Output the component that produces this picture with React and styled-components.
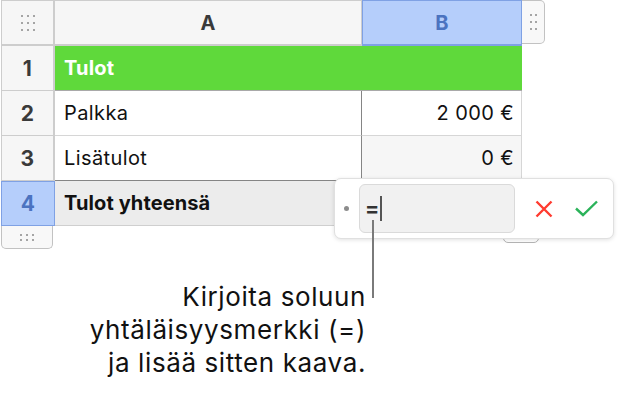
import React from 'react';
import styled, { createGlobalStyle, css } from 'styled-components';

const GlobalStyle = createGlobalStyle`
  html, body {
    margin: 0;
    padding: 0;
    background: #fff;
  }
  body {
    font-family: Inter, "Liberation Sans", sans-serif;
    -webkit-font-smoothing: antialiased;
  }
`;

const LINE = '#cdcdcd';
const DARK = '#858585';
const SEL_BG = '#b5cefb';
const SEL_LINE = '#7fa1e4';
const SEL_TEXT = '#4b73c0';

const Page = styled.div`
  position: relative;
  width: 630px;
  height: 394px;
  overflow: hidden;
`;

const Sheet = styled.div`
  display: grid;
  grid-template-columns: 54px 307px 160px 23px;
  grid-template-rows: 46px 45px 45px 45px 45px 23px;
  width: max-content;
  margin: 0 0 0 1px;
`;

const Dots = styled.div`
  display: grid;
  grid-template-columns: repeat(${p => p.$cols}, 2px);
  grid-auto-rows: 2px;
  column-gap: ${p => p.$gap || 4}px;
  row-gap: ${p => p.$rowGap || 5}px;

  span {
    width: 2px;
    height: 2px;
    border-radius: 50%;
    background: #8a8a8a;
  }
`;

const HeadBase = css`
  box-sizing: border-box;
  display: flex;
  align-items: center;
  justify-content: center;
  background: #f6f6f6;
  color: #3a3a3a;
  font-weight: 700;
  font-size: 20px;
  letter-spacing: 0.3px;
`;

const Corner = styled.div`
  ${HeadBase};
  border: 1px solid ${LINE};
  border-width: 1px 2px 2px 1px;
`;

const ColHead = styled.div`
  ${HeadBase};
  border-top: 1px solid ${LINE};
  border-right: 1px solid ${LINE};
  border-bottom: 2px solid ${LINE};

  ${p => p.$selected && css`
    background: ${SEL_BG};
    color: ${SEL_TEXT};
    border: 1.5px solid ${SEL_LINE};
    border-bottom-width: 2px;
  `}
`;

const SideHandle = styled.div`
  box-sizing: border-box;
  display: flex;
  align-items: center;
  justify-content: center;
  background: #f8f8f8;
  border: 1px solid #c2c2c2;
  border-left: none;
  border-radius: 0 5px 5px 0;
  height: 44px;
`;

const BottomHandle = styled.div`
  box-sizing: border-box;
  display: flex;
  align-items: center;
  justify-content: center;
  background: #f8f8f8;
  border: 1px solid #c2c2c2;
  border-top: none;
  border-radius: 0 0 5px 5px;
  margin-right: 2px;
`;

const RowHead = styled.div`
  ${HeadBase};
  font-size: 21px;
  border-left: 1px solid ${LINE};
  border-right: 2px solid ${LINE};
  border-bottom: 1px solid ${LINE};

  ${p => p.$selected && css`
    background: ${SEL_BG};
    color: ${SEL_TEXT};
    border: 1.5px solid ${SEL_LINE};
  `}
`;

const TitleCell = styled.div`
  grid-column: span 2;
  box-sizing: border-box;
  display: flex;
  align-items: center;
  padding-left: 9px;
  background: #5fd93b;
  color: #fff;
  font-weight: 700;
  font-size: 20px;
  letter-spacing: 0.2px;
  border-bottom: 1px solid #a9a9a9;
`;

const Cell = styled.div`
  box-sizing: border-box;
  display: flex;
  align-items: center;
  justify-content: ${p => (p.$num ? 'flex-end' : 'flex-start')};
  padding: ${p => (p.$num ? '0 7px 0 0' : '0 0 0 9px')};
  background: ${p => p.$bg || '#fff'};
  color: #111;
  font-size: 20px;
  letter-spacing: 0.4px;
  border-right: 1px solid ${p => (p.$num ? '#d6d6d6' : DARK)};
  border-bottom: 1px solid ${p => (p.$last ? DARK : '#d6d6d6')};
`;

const FooterCell = styled.div`
  box-sizing: border-box;
  display: flex;
  align-items: center;
  padding-left: 9px;
  background: #ececec;
  color: #111;
  font-weight: 700;
  font-size: 20px;
  letter-spacing: 0.1px;
  border-right: 1px solid #d0d0d0;
  border-bottom: 1px solid #cfcfcf;
`;

const Empty = styled.div``;

const Popover = styled.div`
  position: absolute;
  left: 334px;
  top: 178px;
  width: 280px;
  height: 61px;
  box-sizing: border-box;
  display: flex;
  align-items: center;
  padding-left: 9px;
  background: #fff;
  border: 1px solid #e0e0e0;
  border-radius: 7px;
  box-shadow: 0 1px 4px rgba(0, 0, 0, 0.12);
  z-index: 3;
`;

const Bullet = styled.span`
  width: 5px;
  height: 5px;
  border-radius: 50%;
  background: #8c8c8c;
`;

const FormulaField = styled.div`
  box-sizing: border-box;
  display: flex;
  align-items: center;
  width: 156px;
  height: 49px;
  margin-left: 10px;
  padding-left: 5px;
  background: #f1f1f1;
  border: 1px solid #dadada;
  border-radius: 6px;
  font-size: 21px;
  font-weight: 700;
  color: #333;
`;

const Caret = styled.span`
  width: 2px;
  height: 25px;
  margin-left: 1px;
  background: #555;
`;

const IconButton = styled.button`
  display: flex;
  align-items: center;
  justify-content: center;
  padding: 0;
  margin-left: ${p => p.$gap}px;
  border: none;
  background: transparent;
`;

const UnderHandle = styled.div`
  position: absolute;
  left: 503px;
  top: 222px;
  width: 36px;
  height: 21px;
  box-sizing: border-box;
  border: 1px solid #b5b5b5;
  border-radius: 5px;
  background: #fff;
  z-index: 2;
`;

const Leader = styled.div`
  position: absolute;
  left: 372px;
  top: 220px;
  width: 2px;
  height: 78px;
  background: #7a7a7a;
  z-index: 4;
`;

const Callout = styled.p`
  width: 366px;
  margin: 31px 0 0;
  text-align: right;
  font-size: 26px;
  line-height: 33px;
  letter-spacing: 0.6px;
  color: #111;
`;

const DotGrid = ({ cols, rows, gap, rowGap }) => (
  <Dots $cols={cols} $gap={gap} $rowGap={rowGap}>
    {Array.from({ length: cols * rows }).map((_, i) => <span key={i} />)}
  </Dots>
);

const rows = [
  { n: '2', label: 'Palkka', value: '2 000 €' },
  { n: '3', label: 'Lisätulot', value: '0 €', bg: '#f6f6f6', last: true },
];

export default function App() {
  return (
    <Page>
      <GlobalStyle />
      <Sheet>
        <Corner><DotGrid cols={3} rows={3} gap={4} rowGap={5} /></Corner>
        <ColHead>A</ColHead>
        <ColHead $selected>B</ColHead>
        <SideHandle><DotGrid cols={2} rows={3} gap={3} rowGap={5} /></SideHandle>

        <RowHead>1</RowHead>
        <TitleCell>Tulot</TitleCell>
        <Empty />

        {rows.map(r => (
          <React.Fragment key={r.n}>
            <RowHead>{r.n}</RowHead>
            <Cell $last={r.last}>{r.label}</Cell>
            <Cell $num $last={r.last} $bg={r.bg}>{r.value}</Cell>
            <Empty />
          </React.Fragment>
        ))}

        <RowHead $selected>4</RowHead>
        <FooterCell>Tulot yhteensä</FooterCell>
        <FooterCell />
        <Empty />

        <BottomHandle><DotGrid cols={3} rows={2} gap={4} rowGap={3} /></BottomHandle>
      </Sheet>

      <UnderHandle />
      <Popover>
        <Bullet />
        <FormulaField>
          =<Caret />
        </FormulaField>
        <IconButton $gap={20}>
          <svg width="18" height="18" viewBox="0 0 18 18">
            <path d="M1.5 1.5 L16.5 16.5 M16.5 1.5 L1.5 16.5" stroke="#ff3b30" strokeWidth="2.4" fill="none" />
          </svg>
        </IconButton>
        <IconButton $gap={22}>
          <svg width="23" height="17" viewBox="0 0 23 17">
            <path d="M1 8.5 L8 15 L22 1.5" stroke="#2bb35a" strokeWidth="2.4" fill="none" />
          </svg>
        </IconButton>
      </Popover>
      <Leader />

      <Callout>
        Kirjoita soluun
        <br />
        yhtäläisyysmerkki (=)
        <br />
        ja lisää sitten kaava.
      </Callout>
    </Page>
  );
}
